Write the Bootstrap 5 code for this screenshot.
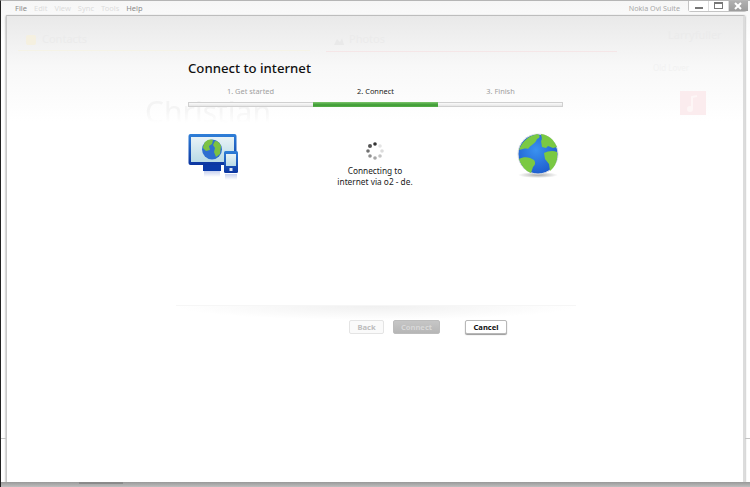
<!DOCTYPE html>
<html lang="en">
<head>
  <meta charset="UTF-8">
  <title>Nokia Ovi Suite</title>
  <link href="https://cdn.jsdelivr.net/npm/bootstrap@5.3.2/dist/css/bootstrap.min.css" rel="stylesheet">
  <style>
    html, body { height: 100%; }
    body {
      background: #fff;
      font-family: "Noto Sans", "Liberation Sans", sans-serif;
      font-size: 8px;
      overflow: hidden;
    }
    .app-window {
      width: 750px;
      height: 487px;
      background: linear-gradient(#f6f6f6 0, #fff 40px);
      border-top: 1px solid #b5b5b5;
      border-left: 1px solid #222;
    }
    .title-bar { height: 14px; padding-left: 14px; }
    .menu-item { color: #dcdcdc; font-size: 7.5px; line-height: 14px; margin-right: 7px; }
    .menu-item.on { color: #8a8a8a; }
    .app-name { color: #a8a8a8; font-size: 7.2px; line-height: 14px; margin-right: 8px; }
    .win-btns { width: 59px; height: 11px; margin-right: 3px; border: 1px solid #c4c4c4; border-top: 0; border-radius: 0 0 3px 3px; }
    .win-btn { flex: 1; border-right: 1px solid #ddd; background: #fff; }
    .win-btn svg { display: block; }
    .win-btn.close-one { flex: 0 0 19px; background: linear-gradient(#b0b0b0, #9c9c9c); border: 0; }
    .stage {
      position: relative;
      width: 739px;
      height: 467px;
      margin-left: 5px;
      border-top: 1px solid #bdbdbd;
      border-left: 1px solid #c8c8c8;
      border-right: 2px solid #dcdcdc;
      background: linear-gradient(#e9e9e9 0, #f8f8f8 50px, #fff 105px);
      box-shadow: 0 1px 2px #888;
    }
    .ghost { position: absolute; white-space: nowrap; }
    .ghost-title { font-size: 11px; line-height: 14px; color: #ebebeb; }
    .ghost-name { font-size: 30px; line-height: 22px; color: #f4f4f4; -webkit-mask-image: linear-gradient(#000 40%, transparent 100%); mask-image: linear-gradient(#000 40%, transparent 100%); }
    .ghost-rule { position: absolute; height: 1px; }
    .wizard { width: 375px; margin-left: 181px; padding-top: 42px; position: relative; }
    .wizard-title { font-size: 13.2px; font-weight: 500; line-height: 20px; color: #111; margin: 0 0 7px; }
    .step-name { width: 125px; text-align: center; color: #a0a0a0; font-size: 7.4px; line-height: 12px; }
    .step-name.now { color: #222; }
    .step-bar { height: 5px; margin-top: 5px; border: 1px solid #d0d0d0; background: linear-gradient(#fafafa, #e6e6e6); }
    .step-fill { width: 125px; margin-left: 124px; height: 5px; margin-top: -1px; background: linear-gradient(#7cc66c, #3c9a33 60%, #5ab04c); }
    .icon-row { height: 58px; margin-top: 26px; }
    .pc-icon { width: 52px; flex: none; }
    .mid-status { flex: 1; text-align: center; color: #222; font-size: 8.3px; line-height: 11px; padding-top: 8px; padding-right: 6px; }
    .mid-status svg { display: block; margin: 0 auto 4px; }
    .globe-icon { width: 44px; margin-right: 3px; flex: none; }
    .wizard-spacer { height: 114px; }
    .foot-shade { width: 400px; margin-left: -12px; height: 15px; background: radial-gradient(ellipse 50% 100% at 50% 0, #f0f0f0, #fff 100%); border-top: 1px solid #f6f6f6; }
    .btn-row { padding-left: 161px; }
    .nk-btn { font-family: "Noto Sans", "Liberation Sans", sans-serif; font-size: 7.6px; font-weight: 700; line-height: 12px; padding: 0; height: 14px; border-radius: 2px; }
    .nk-btn.nk-back { width: 35px; color: #bdbdbd; background: #fafafa; border: 1px solid #e4e4e4; opacity: 1; }
    .nk-btn.nk-connect { width: 47px; color: #d8d8d8; background: linear-gradient(#c6c6c6, #b6b6b6); border: 1px solid #bcbcbc; margin-left: 9px; opacity: 1; }
    .nk-btn.nk-cancel { width: 42px; color: #111; background: #fff; border: 1px solid #b8b8b8; box-shadow: 0 1px 1px #999; margin-left: 25px; }
    .under { height: 6px; width: 100%; position: absolute; left: 0; top: 481px; background: linear-gradient(#999, #c6c6c6); }
    .under-dark { position: absolute; left: 78px; top: 481px; width: 44px; height: 2px; background: #8a8a8a; }
    .side-rule { position: absolute; top: 437px; width: 5px; height: 1px; background: #c4c4c4; }
  </style>
</head>
<body>
  <div class="app-window position-relative">
    <div class="title-bar d-flex align-items-start">
      <span class="menu-item on">File</span>
      <span class="menu-item">Edit</span>
      <span class="menu-item">View</span>
      <span class="menu-item">Sync</span>
      <span class="menu-item">Tools</span>
      <span class="menu-item on">Help</span>
      <span class="app-name ms-auto">Nokia Ovi Suite</span>
      <div class="win-btns d-flex">
        <div class="win-btn"><svg width="19" height="10"><rect x="6" y="6" width="8" height="2" fill="#777"/></svg></div>
        <div class="win-btn"><svg width="19" height="10"><rect x="5.5" y="1.5" width="8" height="6" fill="none" stroke="#777"/><rect x="5" y="1" width="9" height="2" fill="#777"/></svg></div>
        <div class="win-btn close-one"><svg width="19" height="10"><path d="M6 2l6 6M12 2l-6 6" stroke="#fff" stroke-width="2"/></svg></div>
      </div>
    </div>

    <div class="stage">
      <!-- faded app behind the dialog -->
      <svg class="ghost" style="left:19px;top:19px" width="10" height="10"><rect width="10" height="10" rx="2" fill="#f5f0e0"/></svg>
      <span class="ghost ghost-title" style="left:35px;top:16px">Contacts</span>
      <div class="ghost-rule" style="left:11px;top:34px;width:292px;background:#f5f3e6"></div>
      <svg class="ghost" style="left:327px;top:20px" width="10" height="9"><path d="M0 9l3-6 3 3 2-4 2 7z" fill="#e9e9e9"/></svg>
      <span class="ghost ghost-title" style="left:342px;top:16px">Photos</span>
      <div class="ghost-rule" style="left:319px;top:35px;width:291px;background:#f5e6e7"></div>
      <span class="ghost ghost-name" style="left:138px;top:85px">Christian</span>
      <span class="ghost ghost-title" style="left:661px;top:12px">Larryfuller</span>
      <span class="ghost" style="left:646px;top:46px;font-size:8px;color:#f2f2f2">Old Lover</span>
      <svg class="ghost" style="left:673px;top:75px" width="26" height="24"><rect width="26" height="24" fill="#fbecee"/><path d="M12 18V6l5-1" stroke="#fdf6f6" stroke-width="2" fill="none"/><circle cx="10" cy="18" r="3" fill="#fdf6f6"/></svg>

      <div class="wizard">
        <h1 class="wizard-title">Connect to internet</h1>
        <div class="d-flex">
          <div class="step-name">1. Get started</div>
          <div class="step-name now">2. Connect</div>
          <div class="step-name">3. Finish</div>
        </div>
        <div class="step-bar"><div class="step-fill"></div></div>

        <div class="icon-row d-flex">
          <svg class="pc-icon" width="52" height="50" viewBox="0 0 52 50">
            <defs>
              <linearGradient id="scr" x1="0" y1="0" x2="0" y2="1"><stop offset="0" stop-color="#e8f2f6"/><stop offset="1" stop-color="#b9dbe6"/></linearGradient>
              <linearGradient id="frame" x1="0" y1="0" x2="0" y2="1"><stop offset="0" stop-color="#2f7fd8"/><stop offset="1" stop-color="#0b35a0"/></linearGradient>
              <linearGradient id="refl" x1="0" y1="0" x2="0" y2="1"><stop offset="0" stop-color="#c6d0ee"/><stop offset="1" stop-color="#fff"/></linearGradient>
            </defs>
            <rect x="0.5" y="1" width="48" height="31" rx="2" fill="url(#frame)"/>
            <rect x="3" y="4" width="43" height="25" fill="url(#scr)"/>
            <rect x="15" y="32" width="18" height="6" fill="#0a3aa8"/>
            <rect x="16" y="38" width="16" height="6" fill="url(#refl)"/>
            <circle cx="24" cy="16.5" r="10" fill="#2f6fd0"/>
            <path d="M17 9c3-3 6-3 8-2l-1 4-3 2 1 4-4 1-3-3c0-2 1-4 2-6zM27 8c3 0 5 2 6 5l-1 8-4 3-2-5 1-4-2-3z" fill="#7cc242"/>
            <rect x="36" y="18" width="14" height="22" rx="1.5" fill="url(#frame)"/>
            <rect x="38" y="21" width="10" height="12" fill="url(#scr)"/>
            <rect x="41.5" y="35" width="3" height="3" fill="#dfe8f5"/>
            <rect x="37" y="41" width="12" height="6" fill="url(#refl)"/>
          </svg>

          <div class="mid-status">
            <svg width="20" height="20" viewBox="0 0 20 20">
              <circle cx="10" cy="3" r="1.8" fill="#333"/>
              <circle cx="15" cy="5" r="1.8" fill="#e4e4e4"/>
              <circle cx="17" cy="10" r="1.8" fill="#dcdcdc"/>
              <circle cx="15" cy="15" r="1.8" fill="#c4c4c4"/>
              <circle cx="10" cy="17" r="1.8" fill="#a8a8a8"/>
              <circle cx="5" cy="15" r="1.8" fill="#909090"/>
              <circle cx="3" cy="10" r="1.8" fill="#707070"/>
              <circle cx="5" cy="5" r="2" fill="#555"/>
            </svg>
            Connecting to<br>internet via o2 - de.
          </div>

          <svg class="globe-icon" width="44" height="50" viewBox="0 0 44 50">
            <defs>
              <radialGradient id="sea" cx="0.45" cy="0.4" r="0.7"><stop offset="0" stop-color="#3a92f0"/><stop offset="1" stop-color="#1a55c8"/></radialGradient>
              <radialGradient id="shad" cx="0.5" cy="0.5" r="0.5"><stop offset="0" stop-color="#aaa"/><stop offset="1" stop-color="#fff"/></radialGradient>
            </defs>
            <ellipse cx="22" cy="42" rx="20" ry="3" fill="url(#shad)"/>
            <circle cx="22" cy="21" r="20" fill="url(#sea)" stroke="#e2e2e2"/>
            <path d="M3 17C6 8 13 3 21 1c4 1 3 4 0 5-1 3-3 4-5 6-2 1-3 3-4 4-2-1-5 0-9 1zM25 1c8 1 13 6 16 13l-4 1-5-2-2 2-4-1-1-6c2-2 0-5 0-7z" fill="#7ac943"/>
            <path d="M3 26c5-3 11-2 15 1 2 3 1 5-1 7l-2 6C9 38 5 32 3 26zM28 20c4-2 9-3 13-1 1 7-1 14-7 19l-1-7-4-5z" fill="#7ac943"/>
          </svg>
        </div>

        <div class="wizard-spacer"></div>
        <div class="foot-shade"></div>
        <div class="btn-row d-flex">
          <button class="btn nk-btn nk-back" disabled>Back</button>
          <button class="btn nk-btn nk-connect" disabled>Connect</button>
          <button class="btn nk-btn nk-cancel">Cancel</button>
        </div>
      </div>
    </div>

    <div class="side-rule" style="left:0"></div>
    <div class="side-rule" style="right:0"></div>
    <div class="under"></div>
    <div class="under-dark"></div>
  </div>
  <script src="https://cdn.jsdelivr.net/npm/bootstrap@5.3.2/dist/js/bootstrap.bundle.min.js"></script>
</body>
</html>
